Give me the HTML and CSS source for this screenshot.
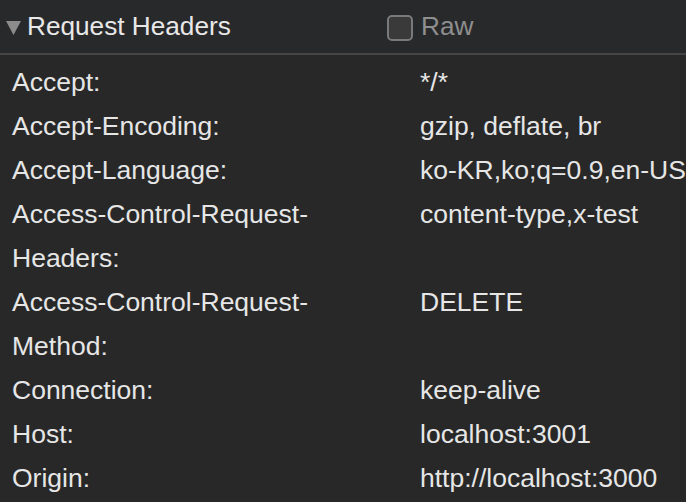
FILE: index.html
```html
<!DOCTYPE html>
<html>
<head>
<meta charset="utf-8">
<link rel="stylesheet" href="styles.css">
</head>
<body>
<div class="panel">
  <div class="header">
    <div class="title">
      <svg class="tri" width="15" height="14" viewBox="0 0 15 14"><polygon points="0,0 15,0 7.5,14" fill="#8c8c8c"/></svg>
      <span>Request Headers</span>
    </div>
    <label class="raw"><span class="box"></span><span>Raw</span></label>
  </div>
  <div class="rows">
    <div class="row"><div class="k">Accept:</div><div class="v">*/*</div></div>
    <div class="row"><div class="k">Accept-Encoding:</div><div class="v">gzip, deflate, br</div></div>
    <div class="row"><div class="k">Accept-Language:</div><div class="v">ko-KR,ko;q=0.9,en-US;q=0.8,en;q=0.7</div></div>
    <div class="row"><div class="k">Access-Control-Request-<br>Headers:</div><div class="v">content-type,x-test</div></div>
    <div class="row"><div class="k">Access-Control-Request-<br>Method:</div><div class="v">DELETE</div></div>
    <div class="row"><div class="k">Connection:</div><div class="v">keep-alive</div></div>
    <div class="row"><div class="k">Host:</div><div class="v">localhost:3001</div></div>
    <div class="row"><div class="k">Origin:</div><div class="v">http://localhost:3000</div></div>
  </div>
</div>
</body>
</html>
```
FILE: styles.css
```css
html, body {
  margin: 0;
  padding: 0;
  background: #282828;
  overflow: hidden;
}
.panel {
  width: 686px;
  height: 502px;
  font-family: "Liberation Sans", Arial, sans-serif;
  font-size: 26.5px;
  color: #e6e6e6;
  overflow: hidden;
}
.header {
  display: flex;
  align-items: center;
  height: 53px;
  border-bottom: 2px solid #464646;
  background: #28292b;
}
.title {
  display: flex;
  align-items: center;
  width: 387px;
  flex-shrink: 0;
  font-size: 26.2px;
}
.tri {
  margin-left: 6px;
  margin-right: 6px;
  margin-top: 3px;
}
.title span {
  color: #e8e8e8;
}
.raw {
  display: flex;
  align-items: center;
  color: #8e8e8e;
  font-size: 26.2px;
}
.box {
  width: 22px;
  height: 22px;
  border: 2px solid #7a7a7a;
  border-radius: 5px;
  background: #3a3a3a;
  margin-right: 8px;
  margin-top: 2px;
}
.rows {
  padding-top: 5px;
}
.row {
  display: flex;
  line-height: 44px;
}
.k {
  width: 408px;
  padding-left: 12px;
  flex-shrink: 0;
  white-space: nowrap;
}
.v {
  white-space: nowrap;
}
```
